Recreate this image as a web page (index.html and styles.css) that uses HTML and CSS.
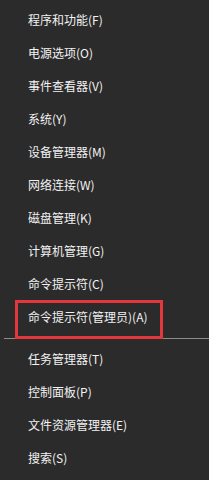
FILE: index.html
```html
<!DOCTYPE html>
<html lang="zh-CN">
<head>
    <meta charset="UTF-8">
    <meta name="viewport" content="width=device-width, initial-scale=1.0">
    <title>快速链接菜单</title>
    <link rel="stylesheet" href="styles.css">
</head>
<body>

<ul class="quick-menu">
    <li class="menu-item">程序和功能(F)</li>
    <li class="menu-item">电源选项(O)</li>
    <li class="menu-item">事件查看器(V)</li>
    <li class="menu-item">系统(Y)</li>
    <li class="menu-item">设备管理器(M)</li>
    <li class="menu-item">网络连接(W)</li>
    <li class="menu-item">磁盘管理(K)</li>
    <li class="menu-item">计算机管理(G)</li>
    <li class="menu-item">命令提示符(C)</li>
    <li class="menu-item marked">命令提示符(管理员)(A)</li>
    <li class="separator"></li>
    <li class="menu-item">任务管理器(T)</li>
    <li class="menu-item">控制面板(P)</li>
    <li class="menu-item">文件资源管理器(E)</li>
    <li class="menu-item">搜索(S)</li>
</ul>

</body>
</html>
```

FILE: styles.css
```css
/* Reset */
* {
    margin: 0;
    padding: 0;
    box-sizing: border-box;
}
body {
    background-color: #2b2b2b; /* menu dark grey */
    font-family: "Noto Sans CJK SC", "Noto Sans", sans-serif;
    color: #f2f2f2;
    width: 209px;
    height: 480px;
    overflow: hidden;
}

/* Menu list */
.quick-menu {
    list-style: none;
    padding-top: 3px;
    display: flex;
    flex-direction: column;
}
.menu-item {
    height: 33px;
    display: flex;
    align-items: center;
    padding-left: 28px;
    font-size: 12px;
    white-space: nowrap;
    position: relative;
}

/* Red highlight box around the admin prompt */
.marked::after {
    content: "";
    position: absolute;
    top: 0;
    left: 15px;
    width: 142px;
    height: 33px;
    border: 3px solid #e2383b;
}

.separator {
    height: 1px;
    margin: 5px 0 3px 4px;
    background-color: #8c8c8c;
}
```
